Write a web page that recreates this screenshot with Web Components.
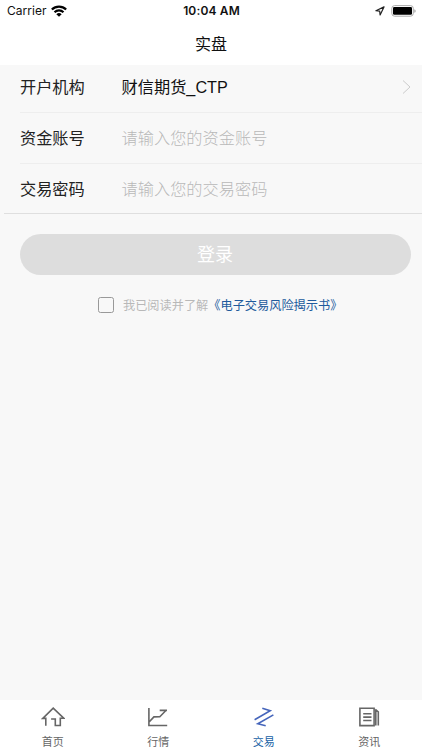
<!DOCTYPE html>
<html lang="zh-CN">
<head>
<meta charset="utf-8">
<title>实盘</title>
<style>
html,body{margin:0;height:100%;background:#f8f8f8}
body{font-family:"Inter","Noto Sans CJK SC",sans-serif;color:#222;overflow:hidden}
</style>
</head>
<body>
<trade-app></trade-app>
<script>
const define = (name, html) => customElements.define(name, class extends HTMLElement {
  constructor() {
    super();
    const t = document.createElement('template');
    t.innerHTML = html;
    this.attachShadow({mode: 'open'}).append(t.content.cloneNode(true));
  }
});

define('status-bar', `<style>
:host{display:grid;grid-template-columns:1fr auto 1fr;align-items:center;height:22px;padding:0 6px 0 7px;font-size:12px;line-height:22px;color:#111}
.l,.r{display:flex;align-items:center}.l{gap:4px;letter-spacing:.05px}.r{justify-content:flex-end;gap:6px}
b{font-weight:600;font-size:12px;letter-spacing:.15px}
svg{display:block}
</style>
<div class="l"><span>Carrier</span><svg width="16" height="12" viewBox="0 0 15 11" fill="none" stroke="#000" stroke-width="2.1"><path d="M.8 4.1a9.6 9.6 0 0 1 13.4 0M3.3 6.7a6 6 0 0 1 8.4 0"/><path d="M7.5 11 5 8.5a3.6 3.6 0 0 1 5 0z" fill="#000" stroke="none"/></svg></div>
<b>10:04 AM</b>
<div class="r"><svg width="10" height="10" viewBox="0 0 10 10" fill="none" stroke="#222" stroke-width="1.2" stroke-linejoin="round"><path d="M9 .9.9 4.7l3.8.5.4 3.8z"/></svg>
<svg width="25" height="12" viewBox="0 0 25 12"><rect x=".8" y=".6" width="21.5" height="10.6" rx="2.8" fill="#fff" stroke="#aaa"/><rect x="2" y="2" width="19" height="7.8" rx="1.3"/><path d="M23.4 4.2q1.2.4 1.2 1.8t-1.2 1.8z" fill="#999"/></svg></div>`);

define('nav-title', `<style>
:host{display:flex;height:41px;align-items:center;justify-content:center;font-size:16px;color:#111}
</style><slot></slot>`);

define('form-row', `<style>
:host{display:flex;box-sizing:border-box;align-items:center;height:51px;margin-left:20px;padding:0 10px 2px 0;border-bottom:1px solid #eee;font-size:16.2px;color:#222}
:host([first]){height:48px;padding-bottom:5px}
:host([last]){margin-left:4px;padding-left:16px;border-color:#dfdfdf;height:50px}
.label{width:101.5px;flex:none}
.value{flex:1;color:#b8b8b8;font-weight:300;letter-spacing:.03px}
:host([first]) .value{color:#111;font-family:"Liberation Sans","Noto Sans CJK SC",sans-serif;font-weight:400}
</style><span class="label"><slot name="label"></slot></span><span class="value"><slot></slot></span><slot name="end"></slot>`);

define('chevron-icon', `<style>:host{display:block;padding-top:2px}svg{display:block}</style>
<svg width="10" height="16" viewBox="0 0 10 16" fill="none" stroke="#ccc"><path d="m1 1.5 7 6.5-7 6.5"/></svg>`);

define('login-button', `<style>
:host{display:block;margin:20px 11.5px 0 19.5px}
button{display:block;width:100%;height:41px;padding:0;border:0;border-radius:21px;background:#ddd;color:#fff;font:400 18px/41px "Inter","Noto Sans CJK SC",sans-serif}
</style><button><slot></slot></button>`);

define('agree-line', `<style>
:host{display:flex;align-items:center;height:20px;margin:20px 0 0 97.5px;font-size:12.2px;color:#b8b8b8;white-space:nowrap}
i{box-sizing:border-box;width:16px;height:16px;border:1px solid #999;border-radius:2.5px;margin-right:9.5px}
::slotted(a){color:#205a9c}
</style><i></i><slot></slot>`);

define('tab-item', `<style>
:host{display:flex;flex-direction:column;align-items:center;flex:1;font-size:11px;line-height:16px;color:#666;padding-top:5px}
:host([active]){color:#205fa5}
::slotted(svg){display:block;width:24px;height:24px;fill:none;stroke:#666;stroke-width:1.6}
span{margin-top:5px}
</style><slot name="icon"></slot><span><slot></slot></span>`);

define('tab-bar', `<style>:host{display:flex;height:50px;background:#fff}</style>
<tab-item><svg slot="icon" viewBox="0 0 24 24"><path d="M4.8 20.8v-7.4H1.8L12.2 3.1l10.5 10.1h-3.4v7.3h-5V14h-4.2"/></svg>首页</tab-item>
<tab-item><svg slot="icon" viewBox="0 0 24 24"><path d="M2.9 3v17.5H21.2M2.9 17.2l5-5.3 5.9-.2 6.1-6.2M13.7 5.4H21"/></svg>行情</tab-item>
<tab-item active><svg slot="icon" viewBox="0 0 24 24" style="stroke:#4565bb"><path d="M2.6 14.7 18.2 5.8 10.3 3.3M21.4 9.9 5.8 18.8l7.9 2"/></svg>交易</tab-item>
<tab-item><svg slot="icon" viewBox="0 0 24 24"><path d="M2.9 3.3h14.2v17.3H2.9zM6.2 8.7h8.3M6.2 12.1h8.3M6.2 15.5h8.3M18.3 4.3l3 2.6v13.7M18.8 5v15.6"/></svg>资讯</tab-item>`);

define('trade-app', `<style>
:host{display:flex;flex-direction:column;height:100vh;background:#f8f8f8}
header{height:65px;background:#fff}
main{flex:1}
</style>
<header><status-bar></status-bar><nav-title>实盘</nav-title></header>
<main>
<form-row first><span slot="label">开户机构</span>财信期货_CTP<chevron-icon slot="end"></chevron-icon></form-row>
<form-row><span slot="label">资金账号</span>请输入您的资金账号</form-row>
<form-row last><span slot="label">交易密码</span>请输入您的交易密码</form-row>
<login-button>登录</login-button>
<agree-line><span>我已阅读并了解</span><a>《电子交易风险揭示书》</a></agree-line>
</main>
<tab-bar></tab-bar>`);
</script>
</body>
</html>
